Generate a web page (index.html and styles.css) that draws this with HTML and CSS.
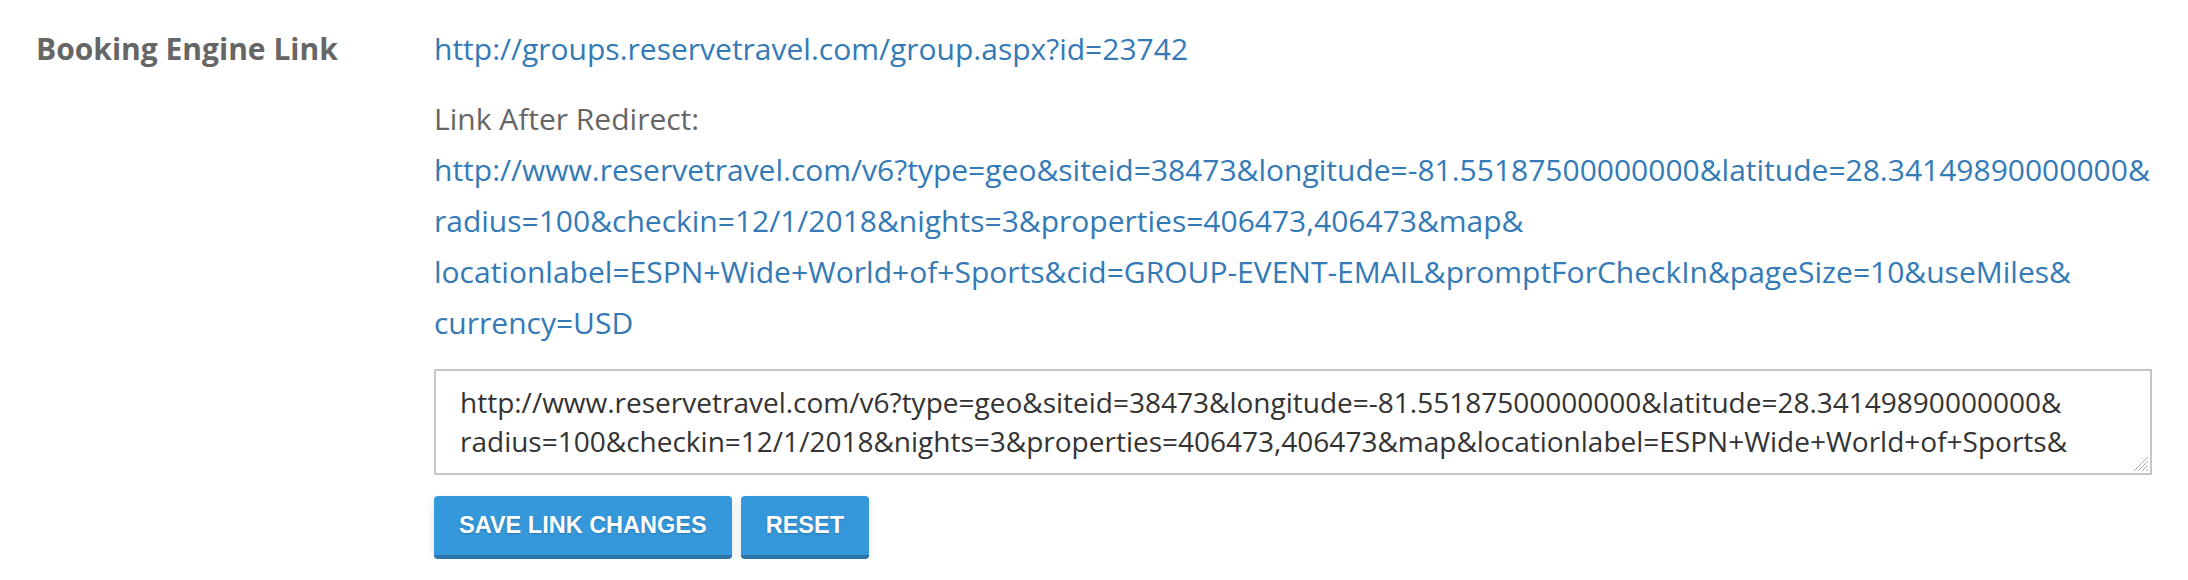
FILE: index.html
```html
<!DOCTYPE html>
<html lang="en">
<head>
<meta charset="utf-8">
<title>Booking Engine Link</title>
<link rel="stylesheet" href="styles.css">
</head>
<body>
<div class="field-row">
  <div class="field-label">Booking Engine Link</div>
  <div class="field-value">
    <a class="link" href="#">http://groups.reservetravel.com/group.aspx?id=23742</a>
    <div class="redirect">
      <div class="redirect-label">Link After Redirect:</div>
      <a class="link" href="#">http://www.reservetravel.com/v6?type=geo&amp;<wbr>siteid=38473&amp;<wbr>longitude=-81.55187500000000&amp;<wbr>latitude=28.34149890000000&amp;<wbr>radius=100&amp;<wbr>checkin=12/1/2018&amp;<wbr>nights=3&amp;<wbr>properties=406473,406473&amp;<wbr>map&amp;<wbr>locationlabel=ESPN+Wide+World+of+Sports&amp;<wbr>cid=GROUP-EVENT-EMAIL&amp;<wbr>promptForCheckIn&amp;<wbr>pageSize=10&amp;<wbr>useMiles&amp;<wbr>currency=USD</a>
    </div>
    <div class="textbox">
      <textarea class="link-input" spellcheck="false">http://www.reservetravel.com/v6?type=geo&amp;&#8203;siteid=38473&amp;&#8203;longitude=-81.55187500000000&amp;&#8203;latitude=28.34149890000000&amp;&#8203;radius=100&amp;&#8203;checkin=12/1/2018&amp;&#8203;nights=3&amp;&#8203;properties=406473,406473&amp;&#8203;map&amp;&#8203;locationlabel=ESPN+Wide+World+of+Sports&amp;&#8203;cid=GROUP-EVENT-EMAIL&amp;&#8203;promptForCheckIn&amp;&#8203;pageSize=10&amp;&#8203;useMiles&amp;&#8203;currency=USD</textarea>
      <svg class="grip" width="18" height="18" viewBox="0 0 18 18" aria-hidden="true">
        <path d="M17 3 L3 17 M17 7 L7 17 M17 11 L11 17 M17 15 L15 17" stroke="#a9adb1" stroke-width="1" fill="none"/>
      </svg>
    </div>
    <div class="actions">
      <button class="btn" type="button">SAVE LINK CHANGES</button>
      <button class="btn" type="button">RESET</button>
    </div>
  </div>
</div>
</body>
</html>
```
FILE: styles.css
```css
html, body {
  margin: 0;
  padding: 0;
  background: #ffffff;
}

body {
  font-family: "Open Sans", "DejaVu Sans", sans-serif;
  color: #666666;
}

.field-row {
  display: grid;
  grid-template-columns: 398px 1fr;
  padding: 23px 36px 0 36px;
}

.field-label {
  font-size: 30px;
  font-weight: 700;
  line-height: 51px;
  color: #666666;
}

.field-value {
  min-width: 0;
}

.link {
  display: block;
  font-size: 30px;
  line-height: 51px;
  color: #337ab7;
  text-decoration: none;
}

.redirect {
  margin-top: 19px;
}

.redirect-label {
  font-size: 30px;
  line-height: 51px;
  color: #666666;
}

.textbox {
  position: relative;
  margin-top: 21px;
  height: 106px;
  box-sizing: border-box;
  border: 2px solid #c4c8cc;
  padding: 12px 24px 0 24px;
  background: #ffffff;
}

.link-input {
  display: block;
  width: 100%;
  height: 78px;
  margin: 0;
  padding: 0;
  border: 0;
  outline: none;
  resize: none;
  overflow: hidden;
  background: transparent;
  font-family: "Open Sans", "DejaVu Sans", sans-serif;
  font-size: 28px;
  line-height: 39px;
  color: #333333;
}

.grip {
  position: absolute;
  right: 1px;
  bottom: 1px;
}

.actions {
  display: flex;
  gap: 9px;
  margin-top: 21px;
}

.btn {
  font-family: "Liberation Sans", Arial, sans-serif;
  font-size: 23.5px;
  font-weight: 700;
  line-height: 59px;
  height: 63px;
  padding: 0 25px;
  margin: 0;
  border: 0;
  border-bottom: 4px solid #2b74aa;
  border-radius: 4px;
  background: #3498db;
  color: #ffffff;
  text-shadow: 0 1px 2px rgba(0, 0, 0, 0.22);
  box-shadow: 0 4px 8px rgba(0, 0, 0, 0.12);
  box-sizing: border-box;
  cursor: pointer;
}
```
